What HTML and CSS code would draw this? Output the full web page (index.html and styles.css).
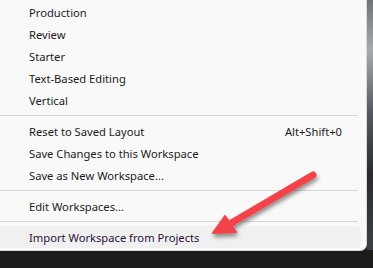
FILE: index.html
```html
<!DOCTYPE html>
<html lang="en">
<head>
    <meta charset="UTF-8">
    <title>Workspaces menu</title>
    <link rel="stylesheet" href="styles.css">
</head>
<body>
    <div class="screen">
        <div class="menu">
            <div class="menu-group">
                <div class="menu-item"><span>Production</span></div>
                <div class="menu-item"><span>Review</span></div>
                <div class="menu-item"><span>Starter</span></div>
                <div class="menu-item"><span>Text-Based Editing</span></div>
                <div class="menu-item"><span>Vertical</span></div>
            </div>
            <div class="separator"></div>
            <div class="menu-group">
                <div class="menu-item"><span>Reset to Saved Layout</span><span class="shortcut">Alt+Shift+0</span></div>
                <div class="menu-item"><span>Save Changes to this Workspace</span></div>
                <div class="menu-item"><span>Save as New Workspace...</span></div>
            </div>
            <div class="separator"></div>
            <div class="menu-group">
                <div class="menu-item"><span>Edit Workspaces...</span></div>
            </div>
            <div class="separator"></div>
            <div class="menu-group">
                <div class="menu-item active"><span>Import Workspace from Projects</span></div>
            </div>
        </div>
        <div class="side-strip"></div>

        <!-- annotation arrow drawn over the menu -->
        <svg class="arrow" width="373" height="268" viewBox="0 0 373 268">
            <defs>
                <filter id="shadow" x="-20%" y="-20%" width="140%" height="140%">
                    <feDropShadow dx="1" dy="3" stdDeviation="2" flood-color="#000" flood-opacity="0.45"/>
                </filter>
            </defs>
            <g filter="url(#shadow)" fill="#f4434c" stroke="#f4434c" stroke-linecap="round" stroke-linejoin="round">
                <line x1="313" y1="175" x2="228" y2="225" stroke-width="7"/>
                <polygon points="213,233 225,216 236,232" stroke-width="2"/>
            </g>
        </svg>
    </div>
</body>
</html>
```

FILE: styles.css
```css
* {
    box-sizing: border-box;
    margin: 0;
    padding: 0;
}

body {
    background: #1c1c1c;
    width: 373px;
    height: 268px;
    overflow: hidden;
    font-family: 'Segoe UI', 'Noto Sans', sans-serif;
    font-size: 11.2px;
    color: #1b1b1b;
}

.screen {
    position: relative;
    display: flex;
    align-items: flex-start;
    height: 268px;
}

.menu {
    width: 367px;
    background: #f9f9f9;
    padding: 1px 5px 2px 0;
    border-right: 1px solid #d9d9d9;
    border-bottom: 1px solid #d9d9d9;
    border-bottom-right-radius: 7px;
    display: flex;
    flex-direction: column;
}

.menu-group {
    display: flex;
    flex-direction: column;
}

.menu-item {
    height: 22px;
    display: flex;
    align-items: center;
    justify-content: space-between;
    padding: 0 19px 0 29px;
    border-radius: 0 5px 5px 0;
}

.menu-item.active {
    background: #f0f0f0;
    color: #2a1038;
}

.shortcut {
    color: #1b1b1b;
}

.separator {
    height: 1px;
    background: #d6d6d6;
    margin: 4px 3px 4px 0;
}

.side-strip {
    flex: 1;
    height: 250px;
    background: linear-gradient(180deg, #6f7378 0%, #a7abb0 20%, #545a5f 45%, #2a2c30 70%, #3c3f44 100%);
}

.arrow {
    position: absolute;
    left: 0;
    top: 0;
    pointer-events: none;
}
```
